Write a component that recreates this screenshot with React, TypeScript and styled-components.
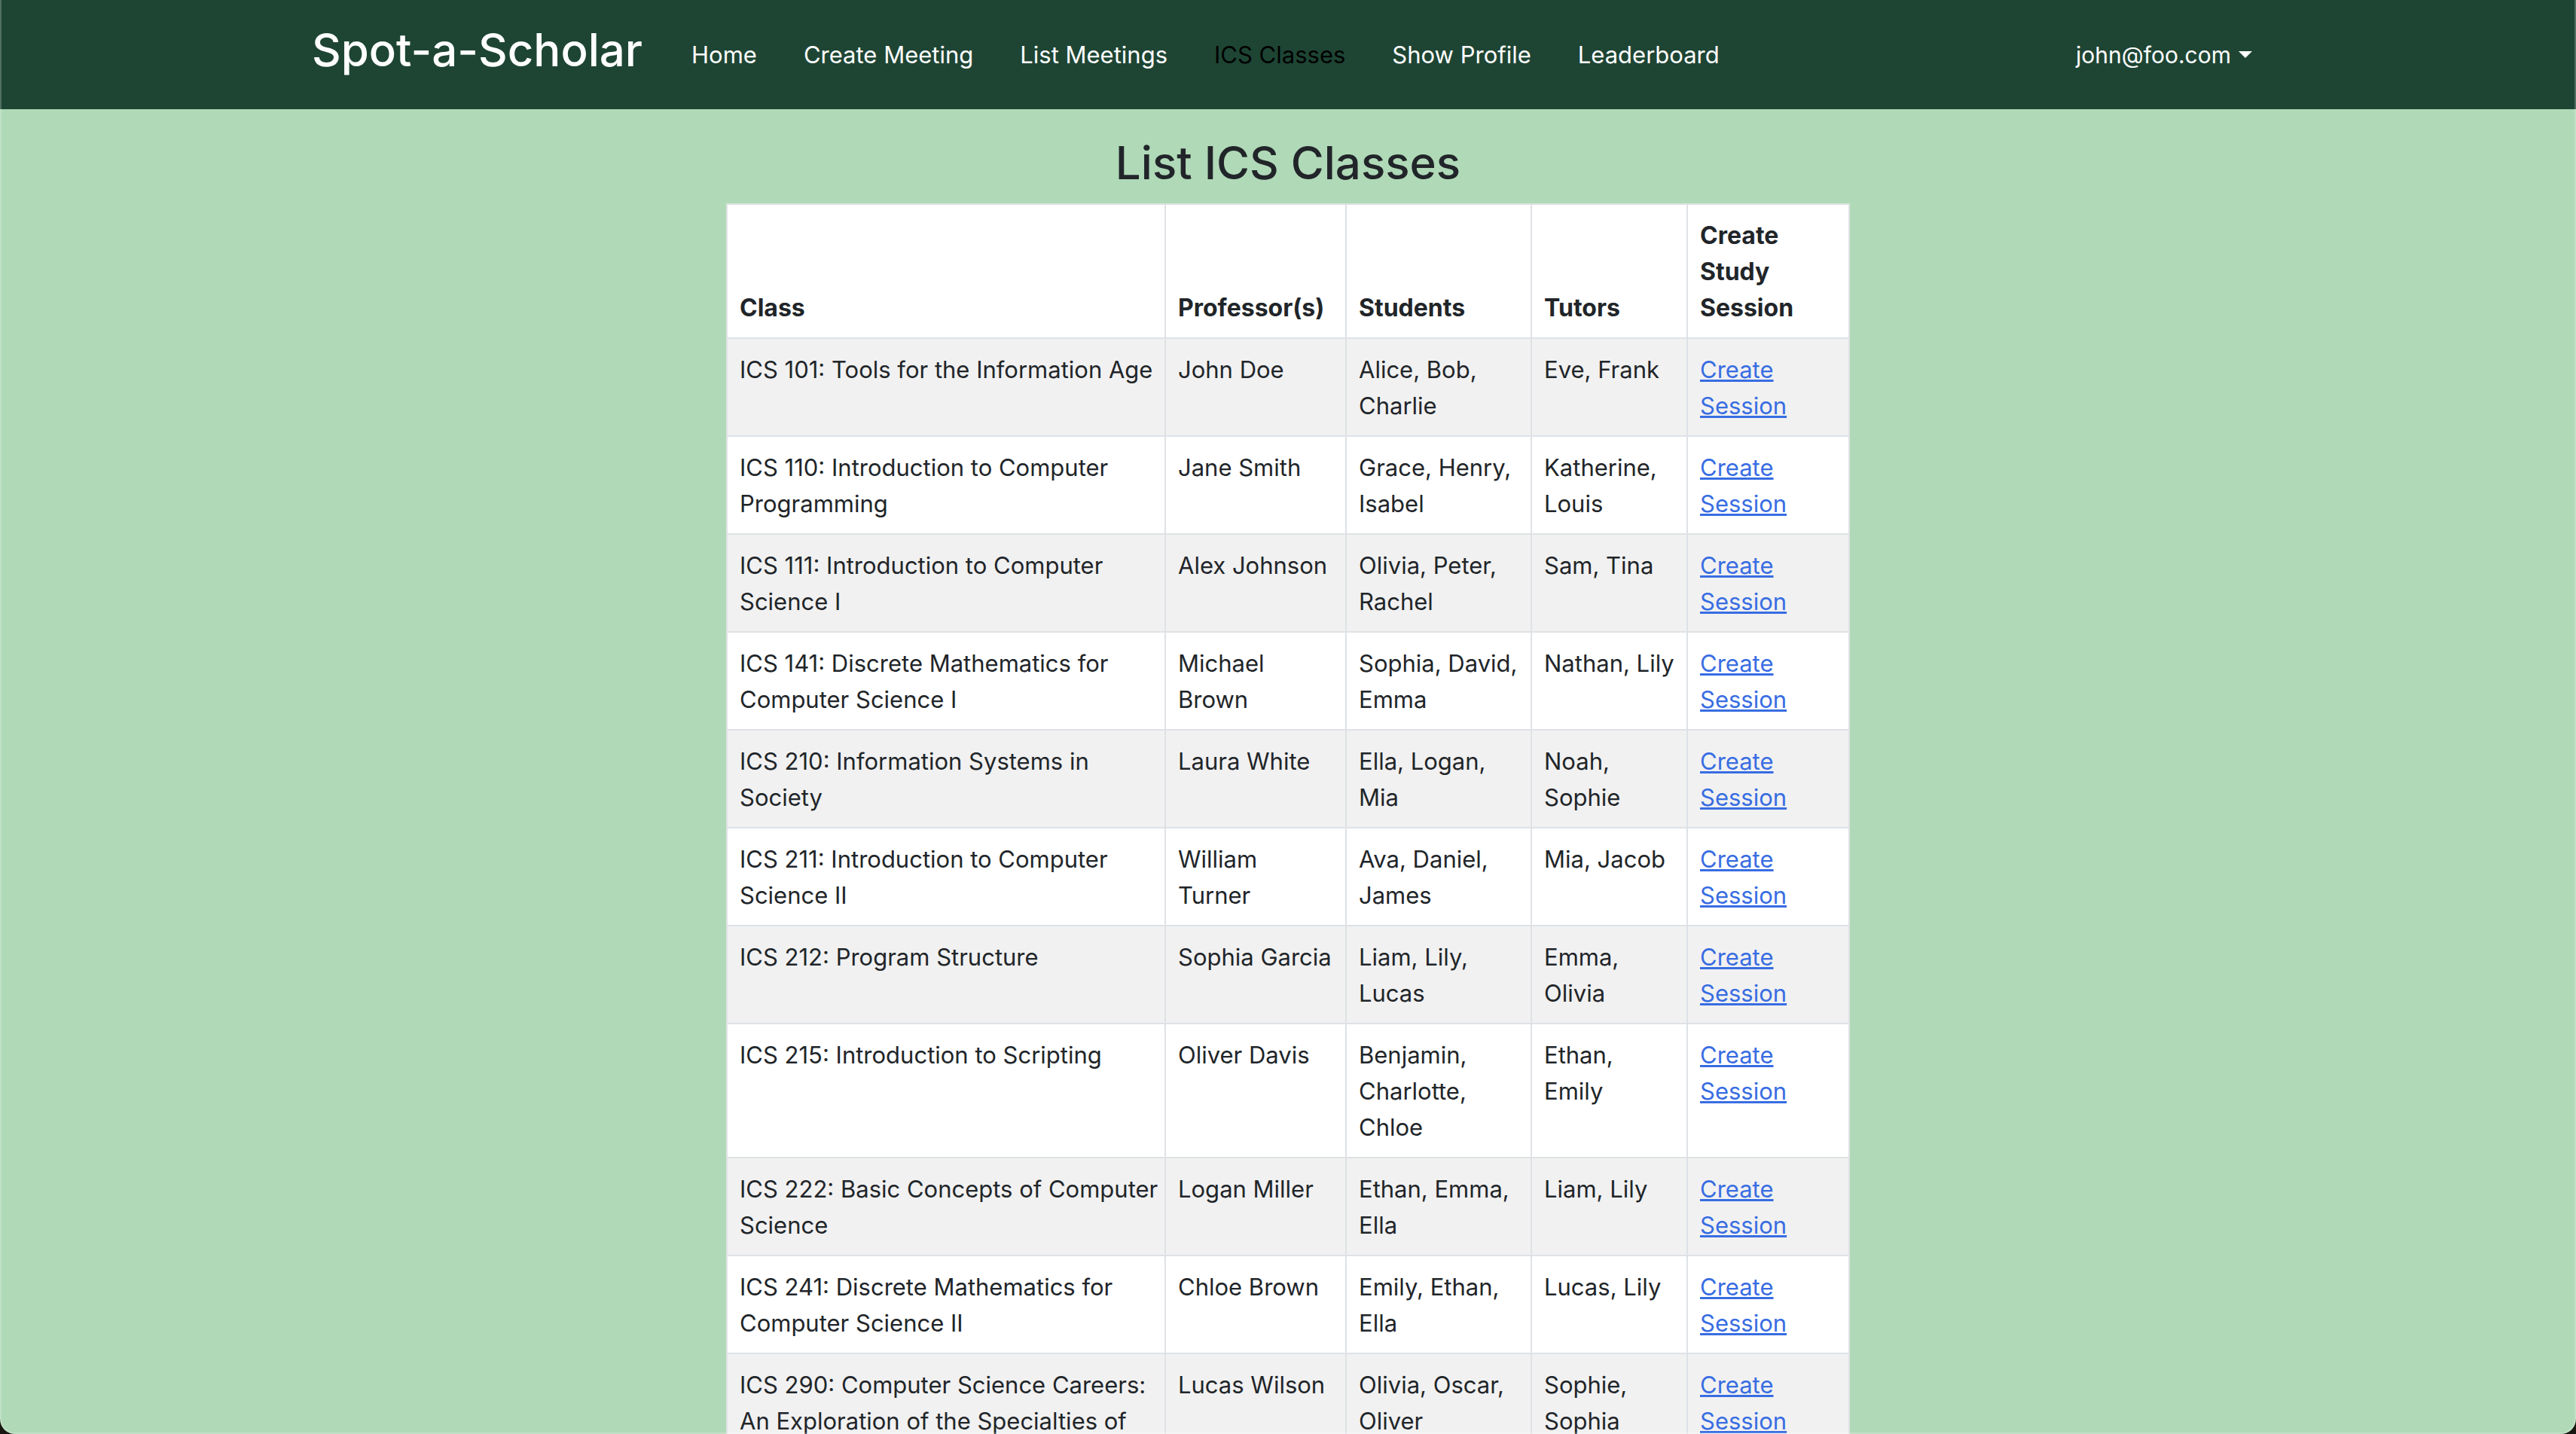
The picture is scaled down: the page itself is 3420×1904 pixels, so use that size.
import React from 'react';
import styled, { createGlobalStyle } from 'styled-components';

const GlobalStyle = createGlobalStyle`
  *, *::before, *::after { box-sizing: border-box; }
  body {
    margin: 0;
    background: #17170f;
    color: #212529;
    font-family: Inter, "Liberation Sans", sans-serif;
    font-size: 31px;
    line-height: 48px;
  }
`;

const Window = styled.div`
  position: relative;
  height: 100vh;
  overflow: hidden;
  background: #b0d9b7;
  border-radius: 0 0 20px 20px;

  &::after {
    content: "";
    position: absolute;
    inset: 0;
    border: 2px solid rgba(255, 255, 255, 0.22);
    border-top: 0;
    border-radius: inherit;
    pointer-events: none;
  }
`;

const Header = styled.header`
  background: #1e4534;
`;

const HeaderInner = styled.div`
  display: flex;
  align-items: center;
  max-width: 2640px;
  min-height: 145px;
  margin: 0 auto;
  padding: 0 24px;
`;

const Brand = styled.a`
  padding-bottom: 14px;
  margin-right: 34px;
  color: #fff;
  font-size: 60px;
  font-weight: 500;
  line-height: 90px;
  text-decoration: none;
  white-space: nowrap;
`;

const Nav = styled.nav`
  display: flex;
  flex: 1;
`;

const NavLink = styled.a<{ $active?: boolean }>`
  padding: 0 31px;
  color: ${(p) => (p.$active ? '#000' : '#fff')};
  text-decoration: none;
  white-space: nowrap;
`;

const UserMenu = styled.button`
  display: flex;
  align-items: center;
  gap: 10px;
  padding: 0 16px;
  border: 0;
  background: none;
  color: #fff;
  font: inherit;
  font-size: 30px;
  cursor: pointer;

  &::after {
    content: "";
    border-top: 9px solid;
    border-right: 9px solid transparent;
    border-left: 9px solid transparent;
  }
`;

const Main = styled.main`
  max-width: 1492px;
  margin: 0 auto;
  padding-top: 33px;
`;

const Title = styled.h2`
  margin: 0 0 15px;
  font-size: 60px;
  font-weight: 500;
  line-height: 77px;
  text-align: center;
`;

const Table = styled.table`
  width: 100%;
  table-layout: fixed;
  border-collapse: collapse;
  background: #fff;
`;

const Col = styled.col<{ $width?: string }>`
  width: ${(p) => p.$width ?? 'auto'};
`;

const HeadCell = styled.th`
  padding: 17px 16px 15px;
  border: 2px solid #dee2e6;
  font-size: 32px;
  font-weight: 700;
  text-align: left;
  vertical-align: bottom;
`;

const Row = styled.tr`
  &:nth-child(odd) {
    background: #f1f1f1;
  }
`;

const Cell = styled.td`
  padding: 17px 16px 15px;
  border: 2px solid #dee2e6;
  vertical-align: top;

  &:first-child {
    padding-right: 4px;
  }
`;

const SessionLink = styled.a`
  color: #386de2;
  text-decoration: underline;
  text-decoration-thickness: 3px;
  text-underline-offset: 2px;
  text-decoration-skip-ink: none;
`;

const links = ['Home', 'Create Meeting', 'List Meetings', 'ICS Classes', 'Show Profile', 'Leaderboard'];

const columns = [
  { label: 'Class', width: '582px' },
  { label: 'Professor(s)', width: '240px' },
  { label: 'Students', width: '246px' },
  { label: 'Tutors', width: '207px' },
  { label: 'Create Study Session', width: undefined },
];

const classes = [
  ['ICS 101: Tools for the Information Age', 'John Doe', 'Alice, Bob, Charlie', 'Eve, Frank'],
  ['ICS 110: Introduction to Computer Programming', 'Jane Smith', 'Grace, Henry, Isabel', 'Katherine, Louis'],
  ['ICS 111: Introduction to Computer Science I', 'Alex Johnson', 'Olivia, Peter, Rachel', 'Sam, Tina'],
  ['ICS 141: Discrete Mathematics for Computer Science I', 'Michael Brown', 'Sophia, David, Emma', 'Nathan, Lily'],
  ['ICS 210: Information Systems in Society', 'Laura White', 'Ella, Logan, Mia', 'Noah, Sophie'],
  ['ICS 211: Introduction to Computer Science II', 'William Turner', 'Ava, Daniel, James', 'Mia, Jacob'],
  ['ICS 212: Program Structure', 'Sophia Garcia', 'Liam, Lily, Lucas', 'Emma, Olivia'],
  ['ICS 215: Introduction to Scripting', 'Oliver Davis', 'Benjamin, Charlotte, Chloe', 'Ethan, Emily'],
  ['ICS 222: Basic Concepts of Computer Science', 'Logan Miller', 'Ethan, Emma, Ella', 'Liam, Lily'],
  ['ICS 241: Discrete Mathematics for Computer Science II', 'Chloe Brown', 'Emily, Ethan, Ella', 'Lucas, Lily'],
  ['ICS 290: Computer Science Careers: An Exploration of the Specialties of', 'Lucas Wilson', 'Olivia, Oscar, Oliver', 'Sophie, Sophia'],
];

export default function App() {
  return (
    <Window>
      <GlobalStyle />
      <Header>
        <HeaderInner>
          <Brand href="#">Spot-a-Scholar</Brand>
          <Nav>
            {links.map((label) => (
              <NavLink key={label} href="#" $active={label === 'ICS Classes'}>
                {label}
              </NavLink>
            ))}
          </Nav>
          <UserMenu type="button">john@foo.com</UserMenu>
        </HeaderInner>
      </Header>
      <Main>
        <Title>List ICS Classes</Title>
        <Table>
          <colgroup>
            {columns.map((c) => (
              <Col key={c.label} $width={c.width} />
            ))}
          </colgroup>
          <thead>
            <tr>
              {columns.map((c) => (
                <HeadCell key={c.label} scope="col">
                  {c.label}
                </HeadCell>
              ))}
            </tr>
          </thead>
          <tbody>
            {classes.map((cells) => (
              <Row key={cells[0]}>
                {cells.map((text, i) => (
                  <Cell key={i}>{text}</Cell>
                ))}
                <Cell>
                  <SessionLink href="#">Create Session</SessionLink>
                </Cell>
              </Row>
            ))}
          </tbody>
        </Table>
      </Main>
    </Window>
  );
}
